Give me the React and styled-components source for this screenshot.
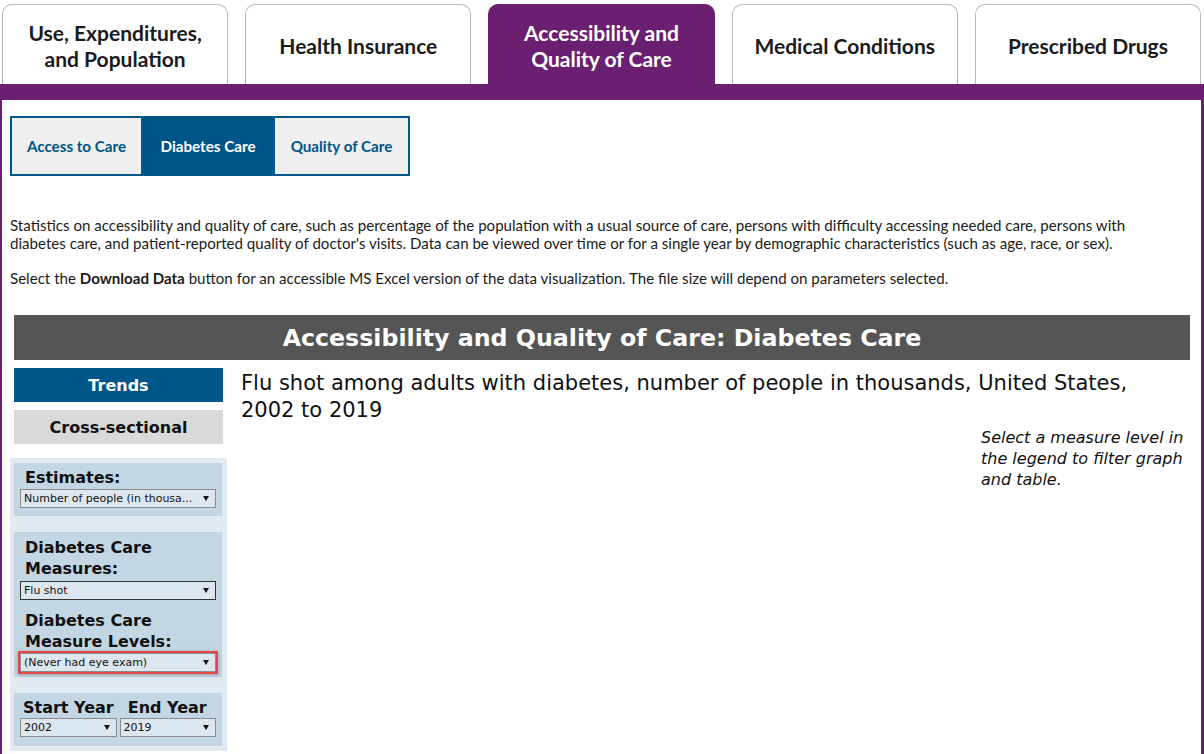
import React from "react";
import styled, { createGlobalStyle } from "styled-components";

const PURPLE = "#6a1f70";
const BLUE = "#005689";

const Global = createGlobalStyle`
  html, body { margin: 0; padding: 0; background: #fff; }
  body { font-family: Lato, "Liberation Sans", sans-serif; color: #1b1b1b; }
  * { box-sizing: border-box; }
`;

const Page = styled.div`
  width: 1204px;
  height: 754px;
  overflow: hidden;
  display: flex;
  flex-direction: column;
`;

const TabBar = styled.div`
  display: flex;
  gap: 17px;
  padding: 4px 3px 0 2px;
`;

const Tab = styled.div`
  width: 227px;
  height: 80px;
  border: 1px solid ${(p) => (p.$active ? PURPLE : "#b9b9b9")};
  border-bottom: none;
  border-radius: 10px 10px 0 0;
  background: ${(p) => (p.$active ? PURPLE : "#fff")};
  color: ${(p) => (p.$active ? "#fff" : "#1b1b1b")};
  font-family: Lato, "Liberation Sans", sans-serif;
  font-weight: 700;
  font-size: 21px;
  line-height: 26px;
  text-align: center;
  display: flex;
  align-items: center;
  justify-content: center;
  padding: 2px 10px 0;
`;

const PurpleBar = styled.div`
  height: 16px;
  background: ${PURPLE};
`;

const Content = styled.div`
  flex: 1;
  border-left: 2px solid ${PURPLE};
  border-right: 3px solid ${PURPLE};
  padding: 16px 0 0 8px;
`;

const SubTabs = styled.div`
  display: inline-flex;
  border: 2px solid ${BLUE};
`;

const SubTab = styled.div`
  width: ${(p) => p.$w}px;
  height: 56px;
  display: flex;
  align-items: center;
  justify-content: center;
  background: ${(p) => (p.$active ? BLUE : "#efefef")};
  color: ${(p) => (p.$active ? "#fff" : BLUE)};
  font-family: Lato, "Liberation Sans", sans-serif;
  font-weight: 700;
  font-size: 15.2px;
`;

const Para = styled.p`
  margin: ${(p) => p.$mt}px 0 0;
  font-family: Lato, "Liberation Sans", sans-serif;
  font-size: 15.1px;
  line-height: 18px;
  color: #1b1b1b;
  padding-right: 40px;
`;

const Dashboard = styled.div`
  margin-top: 28px;
  width: 1180px;
`;

const HeaderBar = styled.div`
  margin-left: 4px;
  width: 1176px;
  height: 45px;
  background: #555555;
  color: #fff;
  font-family: "DejaVu Sans", Verdana, sans-serif;
  font-weight: 700;
  font-size: 23.7px;
  display: flex;
  align-items: center;
  justify-content: center;
`;

const MainRow = styled.div`
  display: flex;
  gap: 14px;
  margin-top: 8px;
`;

const SideCol = styled.div`
  width: 217px;
  display: flex;
  flex-direction: column;
`;

const ViewButton = styled.div`
  margin: ${(p) => p.$mt}px 4px 0;
  height: 34px;
  display: flex;
  align-items: center;
  justify-content: center;
  background: ${(p) => (p.$active ? BLUE : "#d9d9d9")};
  color: ${(p) => (p.$active ? "#fff" : "#111")};
  font-family: "DejaVu Sans", Verdana, sans-serif;
  font-weight: 700;
  font-size: 16px;
`;

const Panel = styled.div`
  margin-top: 14px;
  background: #e2eaf1;
  padding: 5px 5px 5px 4px;
  display: flex;
  flex-direction: column;
  gap: 16px;
`;

const Group = styled.div`
  background: #c3d6e3;
  padding: ${(p) => p.$pad || "6px 6px 9px"};
`;

const Label = styled.div`
  font-family: "DejaVu Sans", Verdana, sans-serif;
  font-weight: 700;
  font-size: 16px;
  line-height: ${(p) => p.$lh || 21}px;
  color: #111;
  padding-left: 5px;
  margin-top: ${(p) => p.$mt || 0}px;
`;

const Select = styled.div`
  position: relative;
  height: 19px;
  width: ${(p) => (p.$w ? p.$w + "px" : "auto")};
  background: #dce6ef;
  border: 1px solid ${(p) => (p.$dark ? "#333" : "#8a8a8a")};
  font-family: "DejaVu Sans", Verdana, sans-serif;
  font-size: 11px;
  color: #111;
  display: flex;
  align-items: center;
  padding: 0 20px 0 3px;
  white-space: nowrap;
  overflow: hidden;
  margin-top: ${(p) => p.$mt || 0}px;
  box-shadow: ${(p) =>
    p.$highlight ? "0 0 0 2px #e8454a, 0 1px 4px 2px rgba(0,0,0,0.25)" : "none"};
`;

const Caret = styled.span`
  position: absolute;
  right: 6px;
  top: 6px;
  width: 0;
  height: 0;
  border-left: 3.5px solid transparent;
  border-right: 3.5px solid transparent;
  border-top: 5px solid #111;
`;

const YearLabels = styled.div`
  display: flex;
  gap: 14px;
  padding-left: 3px;
  font-family: "DejaVu Sans", Verdana, sans-serif;
  font-weight: 700;
  font-size: 16px;
  line-height: 20px;
  color: #111;
  white-space: nowrap;
`;

const YearSelects = styled.div`
  display: flex;
  gap: 3px;
`;

const ChartCol = styled.div`
  flex: 1;
  display: flex;
  flex-direction: column;
`;

const ChartTitle = styled.div`
  font-family: "DejaVu Sans", Verdana, sans-serif;
  font-size: 21px;
  line-height: 27px;
  color: #111;
  padding: 2px 40px 0 0;
`;

const Note = styled.div`
  align-self: flex-end;
  width: 209px;
  margin-top: 3px;
  font-family: "DejaVu Sans", Verdana, sans-serif;
  font-style: italic;
  font-size: 16px;
  line-height: 21px;
  color: #111;
`;

const Dropdown = ({ children, ...rest }) => (
  <Select {...rest}>
    {children}
    <Caret />
  </Select>
);

export default function App() {
  const tabs = [
    "Use, Expenditures, and Population",
    "Health Insurance",
    "Accessibility and Quality of Care",
    "Medical Conditions",
    "Prescribed Drugs",
  ];
  return (
    <Page>
      <Global />
      <TabBar>
        {tabs.map((t, i) => (
          <Tab key={t} $active={i === 2}>
            {t}
          </Tab>
        ))}
      </TabBar>
      <PurpleBar />
      <Content>
        <SubTabs>
          <SubTab $w={129}>Access to Care</SubTab>
          <SubTab $w={134} $active>
            Diabetes Care
          </SubTab>
          <SubTab $w={133}>Quality of Care</SubTab>
        </SubTabs>
        <Para $mt={40}>
          Statistics on accessibility and quality of care, such as percentage of the population
          with a usual source of care, persons with difficulty accessing needed care, persons with
          diabetes care, and patient-reported quality of doctor's visits. Data can be viewed over
          time or for a single year by demographic characteristics (such as age, race, or sex).
        </Para>
        <Para $mt={17}>
          Select the <b>Download Data</b> button for an accessible MS Excel version of the data
          visualization. The file size will depend on parameters selected.
        </Para>
        <Dashboard>
          <HeaderBar>Accessibility and Quality of Care: Diabetes Care</HeaderBar>
          <MainRow>
            <SideCol>
              <ViewButton $mt={0} $active>
                Trends
              </ViewButton>
              <ViewButton $mt={8}>Cross-sectional</ViewButton>
              <Panel>
                <Group $pad="5px 6px 8px">
                  <Label $lh={20}>Estimates:</Label>
                  <Dropdown $mt={1}>Number of people (in thousa...</Dropdown>
                </Group>
                <Group $pad="5px 6px 5px">
                  <Label>
                    Diabetes Care
                    <br />
                    Measures:
                  </Label>
                  <Dropdown $mt={2} $dark>
                    Flu shot
                  </Dropdown>
                  <Label $mt={10}>
                    Diabetes Care
                    <br />
                    Measure Levels:
                  </Label>
                  <Dropdown $mt={1} $highlight>
                    (Never had eye exam)
                  </Dropdown>
                </Group>
                <Group $pad="5px 6px 9px">
                  <YearLabels>
                    <span>Start Year</span>
                    <span>End Year</span>
                  </YearLabels>
                  <YearSelects>
                    <Dropdown $w={97}>2002</Dropdown>
                    <Dropdown $w={97}>2019</Dropdown>
                  </YearSelects>
                </Group>
              </Panel>
            </SideCol>
            <ChartCol>
              <ChartTitle>
                Flu shot among adults with diabetes, number of people in thousands, United States,
                2002 to 2019
              </ChartTitle>
              <Note>Select a measure level in the legend to filter graph and table.</Note>
            </ChartCol>
          </MainRow>
        </Dashboard>
      </Content>
    </Page>
  );
}
